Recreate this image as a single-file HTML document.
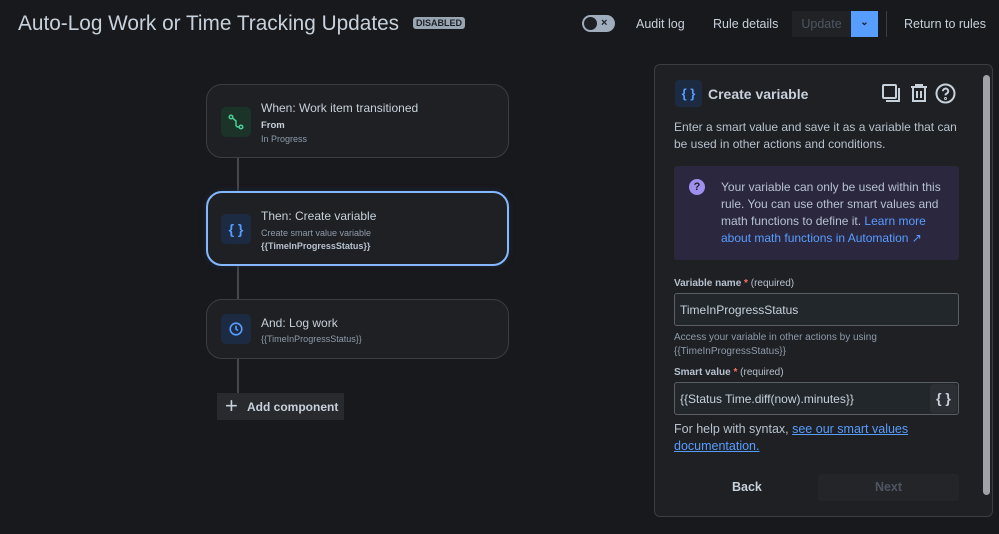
<!DOCTYPE html>
<html><head><meta charset="utf-8"><style>
*{box-sizing:border-box;margin:0;padding:0}
body{width:999px;height:534px;background:#18191c;font-family:"Liberation Sans",sans-serif;color:#b6c2cf;position:relative;overflow:hidden}
.a{position:absolute;white-space:nowrap}
.title{left:18px;top:12px;font-size:20.8px;color:#c7d1db;letter-spacing:0px}
.badge{left:413px;top:17px;background:#9aa5b3;color:#1d2125;font-size:9px;font-weight:bold;padding:1px 3px;border-radius:3px}
.nav{font-size:12.5px;color:#c7d1db;top:17px}
.card{left:206px;width:303px;border:1px solid #3a3d42;border-radius:16px;background:#1f2023}
.ic{position:absolute;left:14px;width:30px;height:30px;border-radius:5px;display:flex;align-items:center;justify-content:center}
.ct{position:absolute;left:54px;font-size:12px;color:#c7d1db;white-space:nowrap}
.cs{position:absolute;left:54px;font-size:9px;color:#8c9bab;white-space:nowrap}
.line{left:237px;width:2px;background:#45484d}
.panel{left:654px;top:64px;width:339px;height:453px;border:1px solid #3a3d42;border-radius:6px;background:#1f2023}
.p{font-size:12px;color:#b6c2cf;line-height:17px;white-space:normal}
.lab{font-size:10px;font-weight:bold;color:#b6c2cf}
.lab span{color:#f87168}.lab i{font-style:normal;font-weight:normal}
.inp{left:674px;width:285px;height:33px;border:1px solid #5a5f66;border-radius:3px;background:#22272b;font-size:12px;color:#c7d1db;padding:9px 5px}
a{color:#579dff}
</style></head><body>
<div class="a title">Auto-Log Work or Time Tracking Updates</div>
<div class="a badge">DISABLED</div>
<div class="a" style="left:582px;top:15px;width:33px;height:17px;border-radius:9px;background:#9fadbc"><div style="position:absolute;left:2px;top:2px;width:13px;height:13px;border-radius:50%;background:#1d2125"></div><div style="position:absolute;left:19px;top:2px;font-size:11px;line-height:12px;color:#1d2125;font-weight:bold">×</div></div>
<div class="a nav" style="left:636px">Audit log</div>
<div class="a nav" style="left:713px">Rule details</div>
<div class="a" style="left:792px;top:11px;width:59px;height:26px;background:#202226;color:#4f5560;font-size:12.5px;padding-top:6px;text-align:center">Update</div>
<div class="a" style="left:851px;top:11px;width:27px;height:26px;background:#579dff;color:#1d2125;font-size:10px;text-align:center;padding-top:6px;font-weight:bold">⌄</div>
<div class="a" style="left:886px;top:11px;width:1px;height:26px;background:#3a3d42"></div>
<div class="a nav" style="left:904px">Return to rules</div>

<div class="a line" style="top:157px;height:35px"></div>
<div class="a line" style="top:265px;height:35px"></div>
<div class="a line" style="top:358px;height:37px"></div>

<div class="a card" style="top:84px;height:74px">
<div class="ic" style="top:22px;background:#1c3329"><svg width="16" height="16" viewBox="0 0 16 16" fill="none" stroke="#4bce97" stroke-width="1.5"><circle cx="3" cy="3" r="1.8"/><circle cx="13" cy="13" r="1.8"/><path d="M4.5 4 L8 7 V11 Q8 13 11 13"/></svg></div>
<div class="ct" style="top:16px">When: Work item transitioned</div>
<div class="cs" style="top:35px;font-weight:bold;color:#c7d1db;font-size:9.5px">From</div>
<div class="cs" style="top:49px">In Progress</div>
</div>
<div class="a card" style="top:191px;height:75px;border:2px solid #85b8ff;box-shadow:0 0 6px #1c2b41">
<div class="ic" style="top:21px;left:13px;background:#1c2b41;color:#579dff;font-weight:bold;font-size:14px">{ }</div>
<div class="ct" style="top:16px;left:53px">Then: Create variable</div>
<div class="cs" style="top:35px;left:53px">Create smart value variable</div>
<div class="cs" style="top:48px;left:53px;font-weight:bold;color:#b6c2cf">{{TimeInProgressStatus}}</div>
</div>
<div class="a card" style="top:299px;height:60px">
<div class="ic" style="top:14px;background:#1c2b41"><svg width="14" height="14" viewBox="0 0 14 14" fill="none" stroke="#579dff" stroke-width="1.6"><circle cx="7" cy="7" r="5.8"/><path d="M7 3.8V7l2 1.5"/></svg></div>
<div class="ct" style="top:16px">And: Log work</div>
<div class="cs" style="top:34px">{{TimeInProgressStatus}}</div>
</div>
<div class="a" style="left:217px;top:393px;width:127px;height:27px;background:#282a2e;font-size:12px;font-weight:bold;color:#c7d1db;padding:7px 0 0 30px">Add component<span style="position:absolute;left:8px;top:0px;font-size:22px;line-height:26px;font-weight:normal">+</span></div>

<div class="a panel"></div>
<div class="a" style="left:983px;top:75px;width:7px;height:420px;background:#9fa2a6;border-radius:4px"></div>
<div class="a" style="left:675px;top:80px;width:27px;height:27px;border-radius:4px;background:#1c2b41;color:#579dff;font-weight:bold;font-size:13px;text-align:center;padding-top:6px">{ }</div>
<div class="a" style="left:708px;top:86px;font-size:14px;font-weight:bold;color:#c7d1db">Create variable</div>
<svg class="a" style="left:881px;top:83px" width="22" height="22" viewBox="0 0 22 22" fill="none" stroke="#c7d1db" stroke-width="2"><rect x="2" y="2" width="13" height="13" rx="1"/><path d="M18 5v13H5"/></svg>
<svg class="a" style="left:909px;top:83px" width="20" height="20" viewBox="0 0 20 20" fill="none" stroke="#c7d1db" stroke-width="2"><path d="M2 4h16M7 4V2h6v2M4 4v14h12V4M8 8v7M12 8v7"/></svg>
<svg class="a" style="left:935px;top:83px" width="21" height="21" viewBox="0 0 21 21" fill="none" stroke="#c7d1db" stroke-width="2"><circle cx="10.5" cy="10.5" r="9"/><path d="M8 8.2a2.6 2.6 0 1 1 3.5 2.4c-.8.4-1 .9-1 1.8"/><circle cx="10.5" cy="15.5" r=".5"/></svg>
<div class="a p" style="left:674px;top:119px;width:290px">Enter a smart value and save it as a variable that can be used in other actions and conditions.</div>
<div class="a" style="left:674px;top:166px;width:285px;height:94px;background:#2b273f;border-radius:3px"></div>
<div class="a" style="left:689px;top:179px;width:16px;height:16px;border-radius:50%;background:#9f8fef;color:#1d2125;font-size:11px;font-weight:bold;text-align:center;line-height:16px">?</div>
<div class="a p" style="left:721px;top:179px;width:230px">Your variable can only be used within this rule. You can use other smart values and math functions to define it. <a>Learn more about math functions in Automation ↗</a></div>
<div class="a lab" style="left:674px;top:278px">Variable name <span>*</span> <i>(required)</i></div>
<div class="a inp" style="top:293px">TimeInProgressStatus</div>
<div class="a" style="left:674px;top:331px;font-size:10px;color:#8c9bab;line-height:14px">Access your variable in other actions by using<br>{{TimeInProgressStatus}}</div>
<div class="a lab" style="left:674px;top:367px">Smart value <span>*</span> <i>(required)</i></div>
<div class="a inp" style="top:382px">{{Status Time.diff(now).minutes}}</div>
<div class="a" style="left:930px;top:384px;width:27px;height:29px;background:#2c2f34;border-radius:3px;color:#c7d1db;font-size:14px;font-weight:bold;text-align:center;padding-top:6px">{ }</div>
<div class="a p" style="left:674px;top:421px;width:240px;font-size:12.5px">For help with syntax, <a style="text-decoration:underline">see our smart values documentation.</a></div>
<div class="a" style="left:732px;top:480px;font-size:12.5px;font-weight:bold;color:#c7d1db">Back</div>
<div class="a" style="left:818px;top:474px;width:141px;height:27px;background:#232529;border-radius:3px;color:#4f5560;font-size:12.5px;font-weight:bold;text-align:center;padding-top:6px">Next</div>
</body></html>
